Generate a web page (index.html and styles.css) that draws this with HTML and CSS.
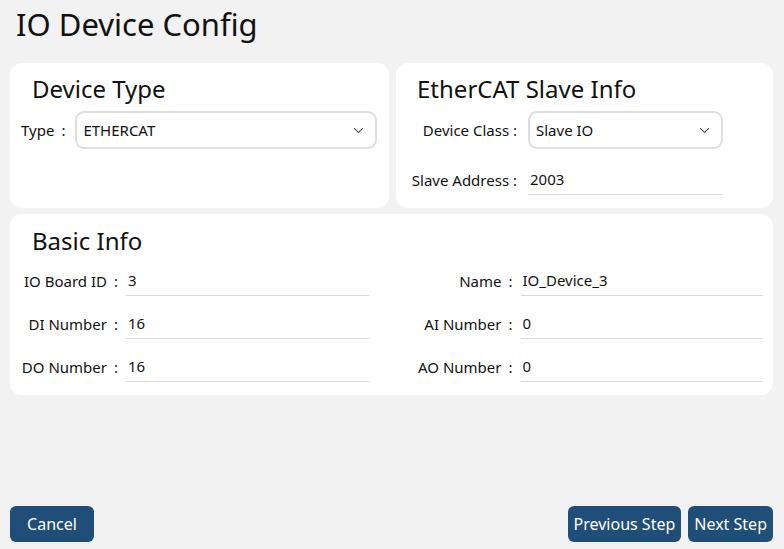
FILE: index.html
```html
<!DOCTYPE html>
<html lang="en">
<head>
    <meta charset="UTF-8">
    <meta name="viewport" content="width=device-width, initial-scale=1.0">
    <title>IO Device Config</title>
    <link rel="stylesheet" href="styles.css">
</head>
<body>
    <div class="page">
        <h1>IO Device Config</h1>

        <div class="top-row">
            <div class="card card-type">
                <h2>Device Type</h2>
                <div class="field">
                    <label class="type-label">Type<span class="colon">:</span></label>
                    <div class="select">
                        <span>ETHERCAT</span>
                        <svg width="11" height="7" viewBox="0 0 11 7"><path d="M1 1.2 L5.5 5.5 L10 1.2" fill="none" stroke="#555" stroke-width="1.1"/></svg>
                    </div>
                </div>
            </div>

            <div class="card card-slave">
                <h2>EtherCAT Slave Info</h2>
                <div class="field">
                    <label class="slave-label">Device Class :</label>
                    <div class="select slave-input">
                        <span>Slave IO</span>
                        <svg width="11" height="7" viewBox="0 0 11 7"><path d="M1 1.2 L5.5 5.5 L10 1.2" fill="none" stroke="#555" stroke-width="1.1"/></svg>
                    </div>
                </div>
                <div class="field">
                    <label class="slave-label">Slave Address :</label>
                    <input class="line-input slave-input" type="text" value="2003">
                </div>
            </div>
        </div>

        <div class="card card-basic">
            <h2>Basic Info</h2>
            <div class="basic-grid">
                <div class="field">
                    <label class="basic-label">IO Board ID<span class="colon">:</span></label>
                    <input class="line-input" type="text" value="3">
                </div>
                <div class="field">
                    <label class="basic-label">Name<span class="colon">:</span></label>
                    <input class="line-input" type="text" value="IO_Device_3">
                </div>
                <div class="field">
                    <label class="basic-label">DI Number<span class="colon">:</span></label>
                    <input class="line-input" type="text" value="16">
                </div>
                <div class="field">
                    <label class="basic-label">AI Number<span class="colon">:</span></label>
                    <input class="line-input" type="text" value="0">
                </div>
                <div class="field">
                    <label class="basic-label">DO Number<span class="colon">:</span></label>
                    <input class="line-input" type="text" value="16">
                </div>
                <div class="field">
                    <label class="basic-label">AO Number<span class="colon">:</span></label>
                    <input class="line-input" type="text" value="0">
                </div>
            </div>
        </div>

        <div class="footer">
            <button class="btn">Cancel</button>
            <div class="footer-right">
                <button class="btn">Previous Step</button>
                <button class="btn">Next Step</button>
            </div>
        </div>
    </div>
</body>
</html>
```

FILE: styles.css
```css
html, body {
    margin: 0;
    padding: 0;
}
body {
    font-family: "Noto Sans", sans-serif;
    background-color: #f2f2f2;
    color: #111;
}
.page {
    height: 549px;
    box-sizing: border-box;
    padding: 0 11px 7px 10px;
    display: flex;
    flex-direction: column;
}
h1 {
    margin: 0;
    padding: 4px 0 0 6px;
    height: 63px;
    box-sizing: border-box;
    font-size: 31px;
    font-weight: normal;
    line-height: 40px;
}
.top-row {
    display: flex;
    gap: 7px;
}
.card {
    background-color: white;
    border-radius: 12px;
    box-sizing: border-box;
}
h2 {
    margin: 0 0 6px 11px;
    font-size: 24px;
    font-weight: normal;
    line-height: 32px;
}
.card-type {
    width: 379px;
    height: 145px;
    padding: 10px 12px 0 11px;
}
.card-slave {
    flex: 1;
    height: 145px;
    padding: 10px 0 0 11px;
}
.card-slave h2 {
    margin-left: 10px;
}
.field {
    display: flex;
    align-items: center;
    font-size: 15px;
}
.field label {
    white-space: nowrap;
}
.colon {
    margin-left: 7px;
}
.type-label {
    margin-right: 10px;
}
.select {
    flex: 1;
    height: 38px;
    box-sizing: border-box;
    border: 2px solid #dedede;
    border-radius: 9px;
    padding: 0 11px 0 6px;
    display: flex;
    align-items: center;
    justify-content: space-between;
}
.line-input {
    flex: 1;
    min-width: 0;
    height: 30px;
    box-sizing: border-box;
    border: none;
    border-bottom: 1px solid #d9d9d9;
    padding: 0 2px 2px;
    font-family: inherit;
    font-size: 15px;
    color: #111;
    background: transparent;
    outline: none;
}
.slave-label {
    width: 110px;
    text-align: right;
    margin-right: 11px;
}
.slave-input {
    flex: none;
    width: 195px;
}
.card-slave .field + .field {
    margin-top: 16px;
}
.card-basic {
    margin-top: 6px;
    padding: 11px 10px 13px 6px;
}
.card-basic h2 {
    margin-left: 16px;
    margin-bottom: 9px;
}
.basic-grid {
    display: grid;
    grid-template-columns: 1fr 1fr;
    column-gap: 42px;
    row-gap: 13px;
}
.basic-label {
    width: 102px;
    text-align: right;
    margin-right: 8px;
}
.footer {
    margin-top: auto;
    display: flex;
    justify-content: space-between;
}
.footer-right {
    display: flex;
    gap: 7px;
}
.btn {
    height: 36px;
    padding: 0 6px;
    min-width: 84px;
    background-color: #1f4e79;
    color: white;
    border: none;
    border-radius: 6px;
    font-family: inherit;
    font-size: 16px;
    cursor: pointer;
}
```
